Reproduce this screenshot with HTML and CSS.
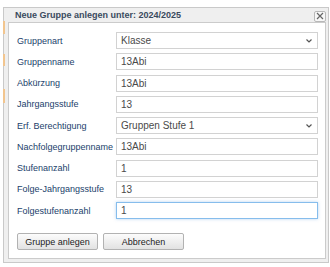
FILE: index.html
```html
<!doctype html>
<html lang="de">
  <head>
    <meta charset="UTF-8" />
    <title>Neue Gruppe anlegen</title>
    <link rel="stylesheet" href="styles.css">
  </head>
  <body>
    <div class="dialog">
      <span class="mark mark-1"></span>
      <span class="mark mark-2"></span>
      <span class="mark mark-3"></span>
      <div class="titlebar">
        <span class="title">Neue Gruppe anlegen unter: 2024/2025</span>
        <button class="close" title="Schließen">
          <svg width="8" height="8" viewBox="0 0 8 8">
            <path d="M1 1 L7 7 M7 1 L1 7" stroke="#666" stroke-width="1.2" fill="none" />
          </svg>
        </button>
      </div>
      <div class="panel">
        <form class="form">
          <label for="art">Gruppenart</label>
          <select id="art" class="field select">
            <option>Klasse</option>
          </select>

          <label for="name">Gruppenname</label>
          <input id="name" class="field" type="text" value="13Abi" />

          <label for="kurz">Abkürzung</label>
          <input id="kurz" class="field" type="text" value="13Abi" />

          <label for="stufe">Jahrgangsstufe</label>
          <input id="stufe" class="field" type="text" value="13" />

          <label for="recht">Erf. Berechtigung</label>
          <select id="recht" class="field select">
            <option>Gruppen Stufe 1</option>
          </select>

          <label for="folgename">Nachfolgegruppenname</label>
          <input id="folgename" class="field" type="text" value="13Abi" />

          <label for="anzahl">Stufenanzahl</label>
          <input id="anzahl" class="field" type="text" value="1" />

          <label for="folgestufe">Folge-Jahrgangsstufe</label>
          <input id="folgestufe" class="field" type="text" value="13" />

          <label for="folgeanzahl">Folgestufenanzahl</label>
          <input id="folgeanzahl" class="field focus" type="text" value="1" />
        </form>
        <div class="buttons">
          <button class="btn">Gruppe anlegen</button>
          <button class="btn">Abbrechen</button>
        </div>
      </div>
    </div>
  </body>
</html>
```

FILE: styles.css
```css
body {
  margin: 0;
  background-color: white;
  font-family: "Liberation Sans", Arial, sans-serif;
}

.dialog {
  position: relative;
  box-sizing: border-box;
  margin: 7px 1px 0 3px;
  height: 256px;
  padding: 0 2px 3px 4px;
  border: 1px solid #c9c9c9;
  background-color: #efefef;
  display: flex;
  flex-direction: column;
}

.mark {
  position: absolute;
  left: -1px;
  width: 2px;
  background-color: #f2c58e;
}

.mark-1 {
  top: 13px;
  height: 13px;
}

.mark-2 {
  top: 46px;
  height: 12px;
}

.mark-3 {
  top: 81px;
  height: 14px;
}

.titlebar {
  height: 14px;
  display: flex;
  align-items: center;
  justify-content: space-between;
  padding-left: 7px;
}

.title {
  font-size: 9px;
  font-weight: bold;
  color: #3a4a5e;
}

.close {
  box-sizing: border-box;
  width: 12px;
  height: 11px;
  margin-top: 2px;
  padding: 0;
  border: 1px solid #b8b8b8;
  border-radius: 2px;
  background-color: #f7f7f7;
  display: flex;
  align-items: center;
  justify-content: center;
}

.panel {
  flex: 1;
  border: 1px solid #cbcbcb;
  background-color: white;
  padding: 9px 7px 0 8px;
}

.form {
  display: grid;
  grid-template-columns: 99px 1fr;
  row-gap: 4.25px;
  align-items: center;
}

label {
  font-size: 9px;
  color: #22416b;
  white-space: nowrap;
}

.field {
  box-sizing: border-box;
  width: 100%;
  height: 17px;
  margin: 0;
  padding: 0 4px;
  border: 1px solid #d2d2d2;
  border-radius: 0;
  background-color: white;
  font-family: "Liberation Sans", Arial, sans-serif;
  font-size: 10px;
  color: #4a4a4a;
  outline: none;
}

.select {
  appearance: none;
  -webkit-appearance: none;
  padding-left: 4px;
  background-image: url("data:image/svg+xml,%3Csvg xmlns='http://www.w3.org/2000/svg' width='6' height='4'%3E%3Cpath d='M0.5 0.5 L3 3 L5.5 0.5' stroke='%23555' stroke-width='1.2' fill='none'/%3E%3C/svg%3E");
  background-repeat: no-repeat;
  background-position: right 5px center;
}

.focus {
  border-color: #86bdec;
  box-shadow: 0 0 3px rgba(110, 170, 230, 0.5);
}

.buttons {
  display: flex;
  gap: 5px;
  margin-top: 14px;
}

.btn {
  box-sizing: border-box;
  width: 81px;
  height: 17px;
  padding: 0;
  border: 1px solid #b2b2b2;
  border-radius: 2px;
  background: linear-gradient(#fcfcfc, #e2e2e2);
  font-family: "Liberation Sans", Arial, sans-serif;
  font-size: 9px;
  color: #222;
}
```
